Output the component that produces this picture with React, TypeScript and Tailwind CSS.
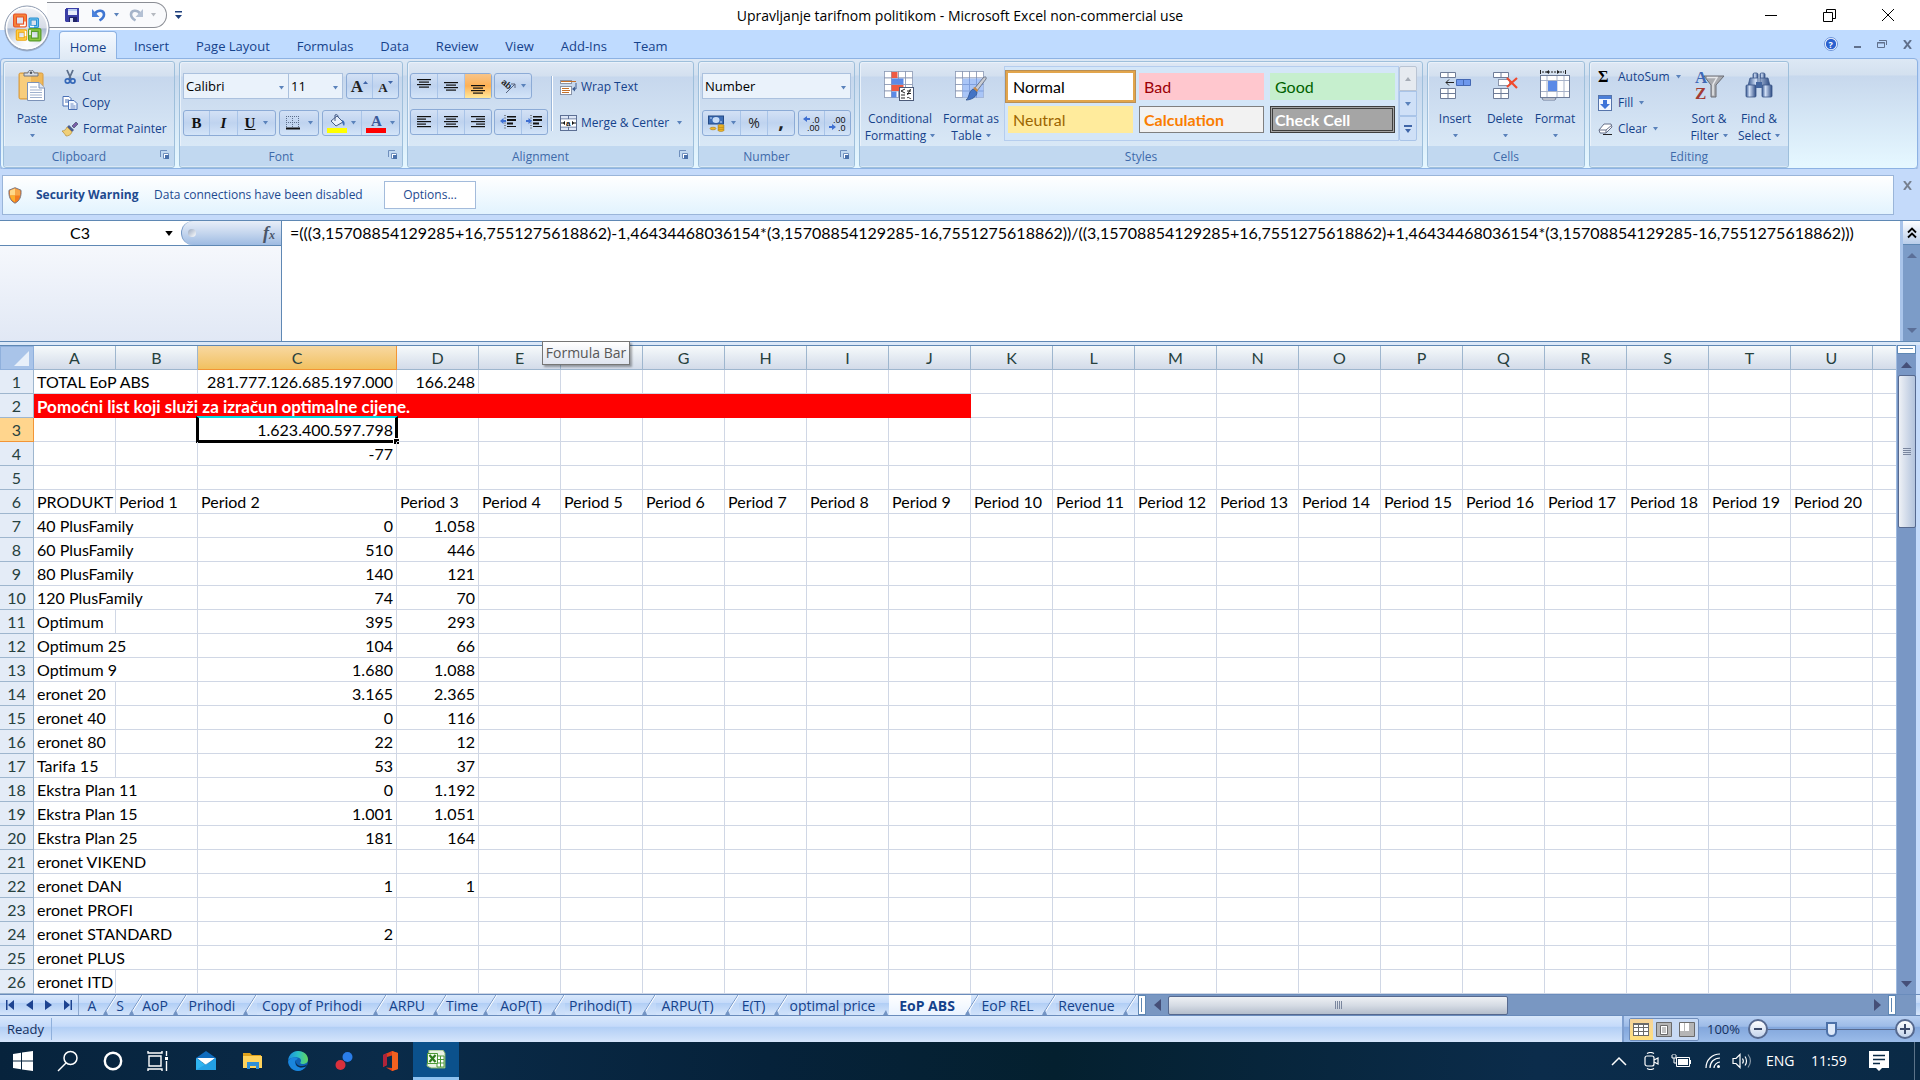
import React from 'react';

const Caret = ({ c = '#5a82bb', w = 6 }: { c?: string; w?: number }) => (
  <svg width={w} height={w / 2 + 1} viewBox="0 0 6 4" className="inline-block shrink-0"><path d="M0 0h6L3 4z" fill={c} /></svg>
);

const OfficeOrb = () => (
  <svg width="48" height="48" viewBox="0 0 48 48">
    <defs>
      <linearGradient id="orb" x1="0" y1="0" x2="0" y2="1"><stop offset="0" stopColor="#f4f5f8" /><stop offset=".5" stopColor="#d5dbe6" /><stop offset=".52" stopColor="#a9b8cf" /><stop offset="1" stopColor="#eef3fa" /></linearGradient>
      <radialGradient id="orbGlow" cx=".5" cy=".85" r=".5"><stop offset="0" stopColor="#fff" /><stop offset="1" stopColor="#fff" stopOpacity="0" /></radialGradient>
    </defs>
    <circle cx="24" cy="25" r="22.5" fill="#6f7f99" opacity=".45" />
    <circle cx="24" cy="24" r="22" fill="url(#orb)" stroke="#8e9bb0" strokeWidth="1" />
    <circle cx="24" cy="24" r="20.5" fill="url(#orbGlow)" stroke="#fff" strokeWidth="1.5" />
    <g fill="none" strokeLinejoin="round">
      <rect x="12" y="11.500" width="10" height="10" stroke="#e5502a" strokeWidth="4" />
      <rect x="12" y="11.500" width="10" height="10" stroke="#f58238" strokeWidth="2" />
      <rect x="27" y="15" width="7.500" height="7.500" stroke="#2b8fd0" strokeWidth="3" />
      <rect x="27" y="15" width="7.500" height="7.500" stroke="#6dc3f0" strokeWidth="1" />
      <rect x="14.500" y="27" width="8" height="8" stroke="#f0a30a" strokeWidth="3.500" />
      <rect x="14.500" y="27" width="8" height="8" stroke="#ffd04a" strokeWidth="1.500" />
      <rect x="27" y="26" width="9.500" height="9.500" stroke="#5a9e2e" strokeWidth="4" />
      <rect x="27" y="26" width="9.500" height="9.500" stroke="#8cc63f" strokeWidth="1.500" />
      <path d="M17 21.500h5v-4M27 22.500h4M22.500 27v5M27 26v5" stroke="#fff" strokeWidth="1.500" />
    </g>
  </svg>
);
const SaveIcon = () => (
  <svg width="15" height="15" viewBox="0 0 15 15"><path d="M0 1h1V0h13v14H1l-1-1z" fill="#3b3fa6" /><path d="M3 1h9v6H3z" fill="#e8eefb" /><path d="M3 1h9v2H3z" fill="#b9cdf2" /><path d="M4 9h8v5H4z" fill="#1f2467" /><path d="M5 10h3v4H5z" fill="#dfe5f5" /></svg>
);
const UndoIcon = ({ gray = false }: { gray?: boolean }) => (
  <svg width="14" height="14" viewBox="0 0 14 14" className={gray ? '-scale-x-100' : ''}>
    <path d="M3 5.500C6 1.500 12 2 12 6.500c0 3-2 4.500-4.500 6" fill="none" stroke={gray ? '#a5b4c9' : '#3f76d2'} strokeWidth="2.600" />
    <path d="M0 1v8h7.500z" fill={gray ? '#b4c1d4' : '#4b82dc'} />
  </svg>
);
const PasteIcon = () => (
  <svg width="28" height="32" viewBox="0 0 28 32">
    <rect x="1" y="3" width="24" height="26" rx="1.500" fill="#f0b95a" stroke="#d89a3e" />
    <rect x="2" y="4" width="11" height="24" fill="#f8cd7c" />
    <path d="M6 6V3h4c0-4 6-4 6 0h4v3z" fill="#d9dde4" stroke="#6e7480" /><circle cx="13" cy="2.800" r="1.300" fill="#4c525d" />
    <path d="M9.500 12.500H21l5.500 5.500v12.500h-17z" fill="#fff" stroke="#7c92b8" /><path d="M21 12.500V18h5.500" fill="#dfe8f6" stroke="#7c92b8" />
    <path d="M12 17h7M12 20h12M12 22.500h12M12 25h12M12 27.500h12" stroke="#9fb0cd" />
  </svg>
);
const CutIcon = () => (
  <svg width="16" height="16" viewBox="0 0 16 16" fill="none"><path d="M5 1l4 9M11 1L7 10" stroke="#5d6f8b" strokeWidth="1.800" /><circle cx="5.500" cy="12" r="2.200" stroke="#3568b8" strokeWidth="1.700" /><circle cx="10.800" cy="12" r="2.200" stroke="#3568b8" strokeWidth="1.700" /></svg>
);
const CopyIcon = () => (
  <svg width="16" height="16" viewBox="0 0 16 16"><path d="M1 1.500h6l2 2V11H1z" fill="#fff" stroke="#4a70b5" /><path d="M3 5h4M3 7h4" stroke="#4a70b5" /><path d="M6.500 5.500h5.500l3 3v6H6.500z" fill="#f3f8ff" stroke="#4a70b5" /><path d="M8.500 9h3M8.500 11h5M8.500 13h5" stroke="#4a70b5" strokeWidth=".8" /></svg>
);
const BrushIcon = () => (
  <svg width="17" height="16" viewBox="0 0 17 16"><path d="M10 5l4-4 2 2-4 4z" fill="#7b5ea8" stroke="#47516e" strokeWidth=".7" /><path d="M7 4l5 5-2 2-5-5z" fill="#4c5f8e" /><path d="M5 6l5 5c-1 3-4 4-6 4-1-2-3-4-4-5 3 0 4-2 5-4z" fill="#f0cf77" stroke="#b58c3a" strokeWidth=".7" /></svg>
);
const LinesIcon = ({ rows, top }: { rows: number[]; top: number }) => (
  <svg width="16" height="16" viewBox="0 0 16 16"><g fill="#111">{rows.map((r, i) => {
    const w = Math.abs(r) % 100, x = r < 0 ? 15 - w : r > 100 ? 1 + (14 - w) / 2 : 1;
    return <rect key={i} x={x} y={top + i * 2.5} width={w} height="1.200" />;
  })}</g></svg>
);
const IndentIcon = ({ right = false }: { right?: boolean }) => (
  <svg width="16" height="16" viewBox="0 0 16 16"><path d="M7 2h9v1.500H7zM7 5h9v2H7zM7 8.500h6v2H7zM7 12h9v1H7z" fill="#111" /><path d="M5 1v14" stroke="#333" strokeDasharray="1 1.500" /><path d={right ? 'M6 7L2.500 4v2H0v2h2.500v2z' : 'M0 7l3.500-3v2H6v2H3.500v2z'} fill="#3f6fd1" /></svg>
);
const WrapIcon = () => (
  <svg width="17" height="16" viewBox="0 0 17 16"><rect x=".5" y="1.500" width="11" height="3" fill="#fff" stroke="#8a94a8" /><rect x=".5" y="7.500" width="11" height="8" fill="#fff" stroke="#8a94a8" /><path d="M1 2.500h15M2 9.500h7M2 11.500h8M2 13.500h7" stroke="#c4712c" /><path d="M16 4v6h-3" fill="none" stroke="#3f5f93" /><path d="M12 10l3-2.500v5z" fill="#3f5f93" /></svg>
);
const MergeIcon = () => (
  <svg width="17" height="16" viewBox="0 0 17 16"><rect x=".5" y=".5" width="16" height="15" fill="#dce6f6" stroke="#5c6f94" /><path d="M8.500 1v3M8.500 12v3M1 4h15M1 12h15" stroke="#5c6f94" /><rect x="1" y="4.500" width="15" height="7" fill="#fff" /><path d="M1 8h4M12 8h4" stroke="#111" /><path d="M5 5.800v4.400L3 8zM12 5.800v4.400L14 8z" fill="#111" /><text x="6" y="11" fontSize="8" fontWeight="700" fontFamily="Liberation Sans, sans-serif" fill="#111">a</text></svg>
);
const MoneyIcon = () => (
  <svg width="17" height="17" viewBox="0 0 17 17"><rect x=".5" y="1" width="15" height="8" fill="#3d6db5" stroke="#244a86" /><ellipse cx="8" cy="5" rx="3.500" ry="3" fill="#c7dcf7" /><path d="M2 3h2M12 7h2" stroke="#c7dcf7" /><g fill="#f2b825" stroke="#a87813" strokeWidth=".6"><ellipse cx="13" cy="15" rx="3.200" ry="1.400" /><ellipse cx="13" cy="13" rx="3.200" ry="1.400" /><ellipse cx="13" cy="11" rx="3.200" ry="1.400" /><ellipse cx="5" cy="13.500" rx="3" ry="1.300" /></g></svg>
);
const DecimalIcon = ({ inc = false }: { inc?: boolean }) => (
  <svg width="17" height="17" viewBox="0 0 17 17" fontFamily="Liberation Sans, sans-serif" fontSize="9" fill="#111" className="overflow-visible"><text x={inc ? 9 : 4} y="8">{inc ? '.0' : '.00'}</text><text x={inc ? 4 : 9} y="16">{inc ? '.00' : '.0'}</text><path d={inc ? 'M0 4l4-3v2h3v2H4v2z' : 'M7 12l-4-3v2H0v2h3v2z'} fill="#3f6fd1" /></svg>
);
const BorderIcon = () => (
  <svg width="14" height="14" viewBox="0 0 14 14"><path d="M.5 0v12M6.500 0v12M12.500 0v12M0 .5h13M0 6.500h13" stroke="#5d6f8b" strokeDasharray="1 1" /><path d="M0 12.500h14" stroke="#111" strokeWidth="2" /></svg>
);
const BucketIcon = () => (
  <svg width="20" height="19" viewBox="0 0 20 19"><path d="M4 7l6-5 6 6-7 4z" fill="#e9f0fb" stroke="#445b86" /><path d="M8 7V1c2-1 3 0 3 2" fill="none" stroke="#445b86" /><path d="M15 6c3 1 3 4 2 6-1-1-2-3-2-6z" fill="#3d6db5" /><rect y="14" width="20" height="5" fill="#ff0" /></svg>
);
const FontColorIcon = () => (
  <svg width="20" height="19" viewBox="0 0 20 19"><text x="5" y="12" fontSize="15" fontWeight="700" fontFamily="Liberation Serif, serif" fill="#3b5998">A</text><rect y="14" width="20" height="5" fill="#f00" /></svg>
);
const OrientIcon = () => (
  <svg width="17" height="16" viewBox="0 0 17 16" className="overflow-visible"><text x="0" y="7" fontSize="9" fontWeight="700" fontFamily="Liberation Sans, sans-serif" fill="#222" transform="rotate(40 3 7)">ab</text><path d="M6 15L15 6M15 6v4M15 6h-4" stroke="#56627c" fill="none" /></svg>
);
const LauncherIcon = () => (
  <svg width="9" height="9" viewBox="0 0 9 9"><path d="M.5 7V.5H7" fill="none" stroke="#6f8fbd" /><path d="M3.500 3.500h5v5h-5z" fill="#fff" stroke="#6f8fbd" /><path d="M5 5h4v4H5z" fill="#4c72ab" /></svg>
);
const CellGrid = ({ n = 4, s = 7 }: { n?: number; s?: number }) => (
  <>{Array.from({ length: n * 4 }, (_, i) => <rect key={i} x={0.5 + (i % 4) * s} y={1.5 + Math.floor(i / 4) * 6.5} width={s} height="6.500" fill="#fff" stroke="#8b98b3" strokeWidth=".8" />)}</>
);
const CondIcon = () => (
  <svg width="32" height="32" viewBox="0 0 32 32"><CellGrid /><path d="M7.500 2h6v6h-6zM7.500 15h12v6h-12z" fill="#ee5a42" /><path d="M7.500 8.500h12v6h-12zM7.500 21.500h5v6h-5z" fill="#5b8ae6" /><rect x="15.500" y="17.500" width="14" height="13" fill="#fff" stroke="#4b5a78" /><path d="M21 19l-4 2 4 2M17 25h4M17 28h4M23 21h4M23 23.500h4M26.500 19l-3 6M23 28c2-2 3 2 4 0" stroke="#222" fill="none" /></svg>
);
const FmtTableIcon = () => (
  <svg width="32" height="32" viewBox="0 0 32 32"><CellGrid /><path d="M7.500 8.500h21v19h-21z" fill="#a9c5f7" /><path d="M7.500 14.500h21M7.500 21h21M14.500 8v20M21.500 8v20" stroke="#7f9fdc" /><path d="M31 9l-9 12-3-2 9-11c2-2 4-1 3 1z" fill="#c9ccd3" stroke="#5c6678" strokeWidth=".8" /><path d="M18 19l4 3c0 5-6 8-11 8 4-3 2-8 7-11z" fill="#4474c4" stroke="#31568f" strokeWidth=".8" /><path d="M18 18l2-1 3 3-1 2z" fill="#c98a45" /></svg>
);
const InsertIcon = () => (
  <svg width="32" height="32" viewBox="0 0 32 32" fill="#fff" stroke="#6e7c98"><path d="M1.500 2.500h15v5h-15zM9 2.500v5M1.500 18.500h15v10h-15zM9 18.500v10M1.500 23.500h15" /><path d="M17.500 9.500h14v6h-14z" fill="#6d97ec" stroke="#4468b4" /><path d="M24.500 10v5" stroke="#4468b4" /><path d="M7 12.500h8M10 9.500l-3 3 3 3" fill="none" stroke="#222" /></svg>
);
const DeleteIcon = () => (
  <svg width="32" height="32" viewBox="0 0 32 32" fill="#fff" stroke="#6e7c98"><path d="M4.500 2.500h15v5h-15zM12 2.500v5M4.500 18.500h15v10h-15zM12 18.500v10M4.500 23.500h15" /><path d="M9.500 9.500h11v6h-11z" strokeDasharray="1 1" stroke="#333f5c" /><path d="M18 8l10 10M28 8L18 17" stroke="#f04a2d" strokeWidth="2.200" /></svg>
);
const FormatIcon = () => (
  <svg width="32" height="32" viewBox="0 0 32 32"><path d="M1.500 0v4M26.500 0v4" stroke="#222" /><path d="M3 2h22" stroke="#222" strokeDasharray="2 1" /><path d="M10 0L7 2l3 2zM18 0l3 2-3 2z" fill="#222" /><rect x="1.500" y="5.500" width="29" height="22" fill="#fff" stroke="#6e7c98" /><path d="M8 6v21M18 6v21M25 6v21M2 10.500h28M2 21.500h28" stroke="#a8b3c9" /><path d="M9 11h9v10H9z" fill="#5b8ae6" /><path d="M3 28h14l-1 2H4z" fill="#fff" stroke="#6e7c98" /></svg>
);
const SortIcon = () => (
  <svg width="32" height="32" viewBox="0 0 32 32" fontFamily="Liberation Serif, serif" fontWeight="700" fontSize="17" className="overflow-visible"><path d="M11 6h20l-8 9v12h-5V15z" fill="#a9abb0" stroke="#6a6d75" /><path d="M14 7.500h10l-4 7v11" fill="none" stroke="#e6e7ea" strokeWidth="1.500" /><text x="2" y="13" fill="#3e68b5">A</text><text x="2" y="29" fill="#a33b33">Z</text></svg>
);
const FindIcon = () => (
  <svg width="30" height="32" viewBox="0 0 30 32"><defs><linearGradient id="bin" x1="0" x2="1"><stop offset="0" stopColor="#35568f" /><stop offset=".35" stopColor="#cfdef5" /><stop offset="1" stopColor="#2c4a82" /></linearGradient></defs><g fill="url(#bin)" stroke="#3a5688" strokeWidth=".8"><rect x="9" y="3" width="5" height="6" rx="1.500" /><rect x="16" y="3" width="5" height="6" rx="1.500" /><path d="M6 8h8v8H4zM16 8h8l2 8H16z" /><rect x="2" y="15" width="10" height="12" rx="1" /><rect x="18" y="15" width="10" height="12" rx="1" /></g><rect x="12" y="12" width="6" height="6" fill="#44669f" /></svg>
);
const FillIcon = () => (
  <svg width="14" height="16" viewBox="0 0 14 16"><rect x=".5" y=".5" width="13" height="15" fill="#f3f7ff" stroke="#5674aa" /><path d="M1 1h12v3H1z" fill="#4c7fd8" /><path d="M5 5h4v4h3l-5 5-5-5h3z" fill="#3f74d8" /></svg>
);
const EraserIcon = () => (
  <svg width="15" height="14" viewBox="0 0 15 14"><path d="M6 2h7l1 3-6 6H2L1 8z" fill="#fff" stroke="#66708a" /><path d="M1 8h7l6-5M8 8v3" fill="none" stroke="#66708a" /><path d="M5 12.500h9" stroke="#222" /></svg>
);

const btn = 'flex items-center justify-center gap-1';
const toolGroup = 'flex h-[26px] divide-x divide-[#a9c4e8] rounded-[3px] border border-[#8cabd6] bg-linear-to-b from-[#d3e1f5] via-[#bfd3ef] to-[#d3e4f8]';

function Group({ label, className, launcher, children }: { label: string; className: string; launcher?: boolean; children: React.ReactNode }) {
  return (
    <section aria-label={label} className={`flex shrink-0 flex-col overflow-hidden rounded-[3px] border border-[#9ebfdb] bg-[linear-gradient(#dfe8f4_0,#d3e0ef_14px,#c6d7ed_15px,#d9e8f6_84px)] shadow-[inset_1px_1px_0_#e9f1fa] ${className}`}>
      <div className="flex h-[84px]">{children}</div>
      <div className={`relative flex h-[20px] items-center justify-center bg-[#c1d8f0] pt-[2px] text-[#3e6aaa] ${launcher ? 'pr-5' : ''}`}>
        {label}
        {launcher && <button aria-label={`${label} options`} className="absolute right-[5px] top-1"><LauncherIcon /></button>}
      </div>
    </section>
  );
}
function BigButton({ icon, a, b, className }: { icon: React.ReactNode; a: string; b?: string; className: string }) {
  return (
    <button className={`flex flex-col items-center pt-2 leading-[17px] ${className}`}>
      <span className="flex h-8 items-center">{icon}</span>
      <span className="mt-2 whitespace-nowrap">{a}</span>
      <span className="flex h-[17px] items-center gap-1 whitespace-nowrap">{b}<Caret w={5} /></span>
    </button>
  );
}
function Combo({ value, label, className }: { value: string; label: string; className: string }) {
  return (
    <span className={`relative flex h-[26px] ${className}`}>
      <select aria-label={label} className="w-full appearance-none border border-[#abc1de] bg-[#eaf2fb] px-[2px] text-[13px] text-black"><option>{value}</option></select>
      <span className="pointer-events-none absolute right-[5px] top-[8px] leading-none"><Caret w={5} /></span>
    </span>
  );
}

const ribbonTabs = ['Insert', 'Page Layout', 'Formulas', 'Data', 'Review', 'View', 'Add-Ins', 'Team'];

function TitleBar() {
  return (
    <header className="relative flex h-[30px] shrink-0 items-center bg-white">
      <div className="absolute left-[3px] top-[4px] z-20"><button aria-label="Office Button"><OfficeOrb /></button></div>
      <div className="ml-[47px] flex h-[26px] w-[120px] items-center rounded-r-full border border-l-0 border-[#8a8d94] bg-[#f9fafc] pl-[18px]">
        <button aria-label="Save"><SaveIcon /></button>
        <button aria-label="Undo" className="ml-3"><UndoIcon /></button>
        <span className="ml-2 flex"><Caret w={5} /></span>
        <button aria-label="Redo" className="ml-[10px]"><UndoIcon gray /></button>
        <span className="ml-2 flex"><Caret w={5} c="#b5b9c0" /></span>
      </div>
      <button aria-label="Customize Quick Access Toolbar" className="ml-2"><svg width="7" height="8" viewBox="0 0 7 8"><path d="M0 0h7v1.500H0zM0 4h7L3.500 8z" fill="#1e3f7c" /></svg></button>
      <h1 className="pointer-events-none absolute inset-x-0 pt-[2px] text-center text-sm text-black">Upravljanje tarifnom politikom - Microsoft Excel non-commercial use</h1>
      <div className="ml-auto flex items-center gap-[46px] pr-[26px]">
        <button aria-label="Minimize"><svg width="12" height="12"><path d="M0 6.500h12" stroke="#000" /></svg></button>
        <button aria-label="Restore"><svg width="13" height="13" fill="none" stroke="#000"><path d="M.5 3.500h9v9h-9zM3.500 3V.5h9v9H10" /></svg></button>
        <button aria-label="Close"><svg width="12" height="12"><path d="M0 0l12 12M12 0L0 12" stroke="#000" /></svg></button>
      </div>
    </header>
  );
}

function TabRow() {
  return (
    <nav className="flex h-[28px] shrink-0 items-end bg-[#bfdbff] pl-[59px] text-[13px] text-[#15428b]">
      <button className="relative z-10 mr-[4px] -mb-px h-7 w-[58px] rounded-t-[4px] border border-b-0 border-[#8db2e3] bg-linear-to-b from-[#f4f9ff] to-[#dfe9f5] pt-[2px]">Home</button>
      <div className="flex gap-px">
        {ribbonTabs.map((t) => <button key={t} className="h-[27px] px-[13px] pt-[2px]">{t}</button>)}
      </div>
      <div className="ml-auto flex h-full items-center gap-[16px] pr-2 text-[#60708c]">
        <button aria-label="Help"><svg width="14" height="14" viewBox="0 0 14 14"><circle cx="7" cy="7" r="6.500" fill="#fff" stroke="#6c93d8" /><circle cx="7" cy="7" r="5.200" fill="#2b61cf" /><text x="4.500" y="10.500" fontSize="9" fontWeight="700" fontFamily="Open Sans, sans-serif" fill="#fff">?</text></svg></button>
        <button aria-label="Minimize workbook"><svg width="7" height="8"><path d="M0 6h7v2H0z" fill="currentColor" /></svg></button>
        <button aria-label="Restore workbook"><svg width="10" height="8" fill="none" stroke="currentColor"><path d="M.5 2.500h7v5h-7zM2 .5h7.500V5M0 3h8" /></svg></button>
        <button aria-label="Close workbook"><svg width="9" height="9"><path d="M1 0l7 9M8 0L1 9" stroke="currentColor" strokeWidth="2" /></svg></button>
      </div>
    </nav>
  );
}

function Ribbon() {
  const row = 'flex h-[26px] items-center gap-1 whitespace-nowrap';
  return (
    <div className="mr-[2px] flex h-[111px] shrink-0 gap-1 overflow-hidden rounded-[4px] border border-[#8db2e3] bg-[linear-gradient(#dde8f5_0,#d3e0ef_16px,#c7d8ed_17px,#e5f7ff_106px)] px-[2px] pt-[2px] text-[#15428b] shadow-[0_1px_1px_#8ea9cf]">
      <Group label="Clipboard" className="w-[172px]" launcher>
        <BigButton icon={<PasteIcon />} a="Paste" className="w-[56px]" />
        <div className="ml-[2px] flex flex-col pt-[2px]">
          <button className={row}><CutIcon />Cut</button>
          <button className={row}><CopyIcon />Copy</button>
          <button className={row}><BrushIcon />Format Painter</button>
        </div>
      </Group>
      <Group label="Font" className="w-[224px]" launcher>
        <div className="flex flex-col gap-[11px] px-[3px] pt-[11px]">
          <div className="flex">
            <Combo label="Font name" value="Calibri" className="w-[106px]" /><Combo label="Font size" value="11" className="-ml-px w-[55px]" />
            <div className={`${toolGroup} ml-[3px] w-[53px] font-['Liberation_Serif',serif] font-bold text-[#222]`}>
              <button className="flex flex-1 items-center justify-center pt-px text-[17px]">A<span className="mb-2"><svg width="5" height="3"><path d="M0 3h5L2.500 0z" fill="#3f65a8" /></svg></span></button>
              <button className="flex flex-1 items-center justify-center pt-1 text-[13px]">A<span className="mb-3"><svg width="5" height="3"><path d="M0 0h5L2.500 3z" fill="#3f65a8" /></svg></span></button>
            </div>
          </div>
          <div className="flex gap-[3px] text-[#111]">
            <div className={`${toolGroup} w-[93px] font-['Liberation_Serif',serif] text-[15px] font-bold`}>
              <button className="w-[26px]">B</button><button className="w-[28px] italic">I</button><button className={`${btn} flex-1`}><span className="mr-1 underline">U</span><Caret w={5} /></button>
            </div>
            <div className={`${toolGroup} w-[40px]`}><button aria-label="Borders" className={`${btn} flex-1`}><BorderIcon /><span className="ml-1 flex"><Caret w={5} /></span></button></div>
            <div className={`${toolGroup} w-[78px]`}>
              <button aria-label="Fill color" className={`${btn} flex-1`}><BucketIcon /><Caret w={5} /></button><button aria-label="Font color" className={`${btn} flex-1`}><FontColorIcon /><Caret w={5} /></button>
            </div>
          </div>
        </div>
      </Group>
      <Group label="Alignment" className="w-[287px]" launcher>
        <div className="flex flex-col gap-[10px] pl-[2px] pt-[11px]">
          <div className="flex gap-[2px]">
            <div className={`${toolGroup} w-[82px]`}>
              <button aria-label="Top align" className={`${btn} flex-1`}><LinesIcon rows={[14, 110, 14, 110]} top={1} /></button>
              <button aria-label="Middle align" className={`${btn} flex-1`}><LinesIcon rows={[14, 110, 14, 110]} top={4} /></button>
              <button aria-label="Bottom align" className={`${btn} flex-1 bg-linear-to-b from-[#f7c488] via-[#fdb053] to-[#ffe899]`}><LinesIcon rows={[14, 110, 14, 110]} top={7} /></button>
            </div>
            <div className={`${toolGroup} w-[38px]`}><button aria-label="Orientation" className={`${btn} flex-1`}><OrientIcon /><Caret w={5} /></button></div>
          </div>
          <div className="flex gap-[2px]">
            <div className={`${toolGroup} w-[82px]`}>
              <button aria-label="Align left" className={`${btn} flex-1`}><LinesIcon rows={[14, 9, 14, 9, 14]} top={2} /></button>
              <button aria-label="Center" className={`${btn} flex-1`}><LinesIcon rows={[14, 110, 14, 110, 14]} top={2} /></button>
              <button aria-label="Align right" className={`${btn} flex-1`}><LinesIcon rows={[14, -9, 14, -9, 14]} top={2} /></button>
            </div>
            <div className={`${toolGroup} w-[54px]`}><button aria-label="Decrease indent" className={`${btn} flex-1`}><IndentIcon /></button><button aria-label="Increase indent" className={`${btn} flex-1`}><IndentIcon right /></button></div>
          </div>
        </div>
        <div className="ml-[3px] mt-[14px] h-[55px] w-[2px] border-l border-[#9ab6da] bg-white" />
        <div className="ml-[7px] flex flex-col gap-[10px] pt-[12px]">
          <button className={row}><WrapIcon />Wrap Text</button>
          <button className={row}><MergeIcon />Merge &amp; Center<span className="ml-1 flex"><Caret w={5} /></span></button>
        </div>
      </Group>
      <Group label="Number" className="w-[157px]" launcher>
        <div className="flex flex-col gap-[11px] px-[3px] pt-[11px]">
          <Combo label="Number format" value="Number" className="w-[149px]" />
          <div className="flex gap-[3px] text-[#222]">
            <div className={`${toolGroup} w-[93px]`}><button aria-label="Accounting format" className={`${btn} w-[38px] gap-[6px]`}><MoneyIcon /><Caret w={5} /></button><button className="flex-1 text-[14px]">%</button><button className="flex-1 pb-2 text-[20px] leading-none font-bold">,</button></div>
            <div className={`${toolGroup} w-[53px]`}><button aria-label="Increase decimal" className={`${btn} flex-1`}><DecimalIcon inc /></button><button aria-label="Decrease decimal" className={`${btn} flex-1`}><DecimalIcon /></button></div>
          </div>
        </div>
      </Group>
      <Group label="Styles" className="w-[564px]">
        <BigButton icon={<CondIcon />} a="Conditional" b="Formatting" className="w-[80px]" />
        <BigButton icon={<FmtTableIcon />} a="Format as" b="Table" className="w-[62px]" />
        <div className="ml-[2px] mt-1 flex h-[75px]">
          <div className="grid w-[395px] grid-cols-3 content-start gap-[6px] border border-[#b5cdee] bg-[#d4e6f8] px-[3px] pt-[6px] font-['Lato',sans-serif] text-[16px]">
            <button className="h-[27px] bg-white px-[5px] text-left text-black outline-2 outline-[#e2a54c] shadow-[0_0_0_3px_#b98f55]">Normal</button>
            <button className="h-[27px] bg-[#ffc7ce] px-[5px] text-left text-[#9c0006]">Bad</button>
            <button className="h-[27px] bg-[#c6efce] px-[5px] text-left text-[#006100]">Good</button>
            <button className="h-[27px] bg-[#ffeb9c] px-[5px] text-left text-[#9c6500]">Neutral</button>
            <button className="h-[27px] border border-[#7f7f7f] bg-[#f2f2f2] px-1 text-left font-bold text-[#fa7d00]">Calculation</button>
            <button className="flex h-[27px] items-center border-[3px] border-double border-[#3f3f3f] bg-[#a5a5a5] px-[2px] text-left font-bold text-white">Check Cell</button>
          </div>
          <div className="flex w-[18px] flex-col">
            <button aria-label="Previous styles" className={`${btn} flex-1 rounded-t-[2px] border border-[#b9c4d4] bg-[#e6eaf0]`}><svg width="6" height="4"><path d="M0 4h6L3 0z" fill="#a5abb5" /></svg></button>
            <button aria-label="Next styles" className={`${btn} flex-1 border border-[#a9c4e8] bg-[#cfe0f7]`}><Caret /></button>
            <button aria-label="More styles" className={`${btn} flex-1 rounded-b-[2px] border border-[#a9c4e8] bg-[#cfe0f7]`}><svg width="8" height="8"><path d="M0 0h8v2H0zM1 4h6L4 8z" fill="#3f65a8" /></svg></button>
          </div>
        </div>
      </Group>
      <Group label="Cells" className="w-[158px]">
        <div className="flex pl-[2px]">
          <BigButton icon={<InsertIcon />} a="Insert" className="w-[50px]" />
          <BigButton icon={<DeleteIcon />} a="Delete" className="w-[50px]" />
          <BigButton icon={<FormatIcon />} a="Format" className="w-[50px]" />
        </div>
      </Group>
      <Group label="Editing" className="w-[200px]">
        <div className="flex w-[94px] flex-col pl-[8px] pt-[2px]">
          <button className={`${row} gap-[2px]`}><span className="w-[18px] text-left font-['Liberation_Serif',serif] text-[16px] font-bold text-black">Σ</span>AutoSum<span className="ml-1 flex"><Caret w={5} /></span></button>
          <button className={`${row} gap-[2px]`}><span className="w-[18px]"><FillIcon /></span>Fill<span className="ml-1 flex"><Caret w={5} /></span></button>
          <button className={`${row} gap-[2px]`}><span className="w-[18px]"><EraserIcon /></span>Clear<span className="ml-1 flex"><Caret w={5} /></span></button>
        </div>
        <BigButton icon={<SortIcon />} a="Sort &amp;" b="Filter" className="w-[50px]" />
        <BigButton icon={<FindIcon />} a="Find &amp;" b="Select" className="w-[50px]" />
      </Group>
    </div>
  );
}

function SecurityBar() {
  return (
    <div className="flex h-[51px] shrink-0 bg-[#c4dafa] pl-[2px] pt-[6px]">
      <div className="flex h-[40px] flex-1 items-center border border-[#9ab5d9] bg-linear-to-b from-white to-[#e2f3fe] pl-[5px] text-[#1e4a8f]">
        <svg width="14" height="17" viewBox="0 0 14 17"><path d="M7 .7l6 2.500c.5 6-1 10.500-6 13-5-2.500-6.500-7-6-13z" fill="#f47b20" stroke="#7c7c84" /><path d="M7 1.500L2 3.500v5h5z" fill="#ffd989" /><path d="M7 1.500l5 2v5H7z" fill="#f8a648" /><path d="M2 8.500h5V15c-3-1.500-4.500-4-5-6.500z" fill="#fbb02d" /></svg>
        <strong className="ml-[14px] w-[118px]">Security Warning</strong>
        <span className="w-[230px]">Data connections have been disabled</span>
        <button className="h-[28px] w-[92px] border border-[#a3bbdb] bg-white">Options...</button>
      </div>
      <button aria-label="Close message bar" className="flex w-[26px] justify-center pt-[6px]"><svg width="9" height="9"><path d="M1 0l7 9M8 0L1 9" stroke="#77808f" strokeWidth="2" /></svg></button>
    </div>
  );
}

function FormulaBar() {
  return (
    <div className="flex h-[122px] shrink-0 border-y border-[#5f88b4]">
      <div className="flex w-[282px] shrink-0 flex-col border-r border-[#5f88b4] bg-linear-to-b from-[#fbfcfe] to-[#e1e8f5]">
        <div className="flex h-[25px] border-b border-[#5f88b4] bg-white">
          <input aria-label="Name Box" defaultValue="C3" className="w-[160px] text-center font-['Lato',sans-serif] text-[16px] text-black outline-none" />
          <button aria-label="Name list" className="w-[18px]"><Caret w={8} c="#000" /></button>
          <div className="ml-[3px] flex flex-1 items-center justify-between rounded-l-full border-l border-[#7397c5] bg-linear-to-b from-[#e8eef8] via-[#c5d6ee] to-[#9ebbe2] pl-[6px] pr-[6px]">
            <span className="size-2 rounded-full bg-linear-to-br from-[#9aa9c0] to-white" />
            <button aria-label="Insert Function" className="font-['Liberation_Serif',serif] text-[18px] font-bold italic leading-none text-[#4a5568]">f<span className="text-[12px]">x</span></button>
          </div>
        </div>
      </div>
      <textarea aria-label="Formula" spellCheck={false} className="flex-1 resize-none bg-white px-2 pt-px font-['Lato',sans-serif] text-[16px] leading-[22px] text-black outline-none" defaultValue="=(((3,15708854129285+16,7551275618862)-1,46434468036154*(3,15708854129285-16,7551275618862))/((3,15708854129285+16,7551275618862)+1,46434468036154*(3,15708854129285-16,7551275618862)))" />
      <div className="flex w-[20px] flex-col items-center border-l-[3px] border-[#a9c4ea] bg-[#7c9cc8]">
        <button aria-label="Collapse formula bar" className="flex h-6 w-full items-center justify-center border-b border-[#5f88b4] bg-linear-to-b from-white to-[#b9cdea]"><svg width="10" height="12" fill="none" stroke="#000" strokeWidth="1.800"><path d="M1 5.500l4-4 4 4M1 10.500l4-4 4 4" /></svg></button>
        <svg width="10" height="5" className="mt-2"><path d="M0 5h10L5 0z" fill="#5b6f98" /></svg>
        <svg width="10" height="5" className="mt-auto mb-2"><path d="M0 0h10L5 5z" fill="#5b6f98" /></svg>
      </div>
    </div>
  );
}

const letters = 'ABCDEFGHIJKLMNOPQRSTU'.split('');
type Row = { a: string; c?: string; d?: string; span?: boolean };
const rows: Row[] = [
  { a: 'TOTAL EoP ABS', c: '281.777.126.685.197.000', d: '166.248', span: true },
  { a: '' }, { a: '', c: '1.623.400.597.798' }, { a: '', c: '-77' }, { a: '' }, { a: 'PRODUKT' },
  { a: '40 PlusFamily', c: '0', d: '1.058', span: true }, { a: '60 PlusFamily', c: '510', d: '446', span: true },
  { a: '80 PlusFamily', c: '140', d: '121', span: true }, { a: '120 PlusFamily', c: '74', d: '70', span: true },
  { a: 'Optimum', c: '395', d: '293' }, { a: 'Optimum 25', c: '104', d: '66', span: true },
  { a: 'Optimum 9', c: '1.680', d: '1.088', span: true }, { a: 'eronet 20', c: '3.165', d: '2.365' },
  { a: 'eronet 40', c: '0', d: '116' }, { a: 'eronet 80', c: '22', d: '12' }, { a: 'Tarifa 15', c: '53', d: '37' },
  { a: 'Ekstra Plan 11', c: '0', d: '1.192', span: true }, { a: 'Ekstra Plan 15', c: '1.001', d: '1.051', span: true },
  { a: 'Ekstra Plan 25', c: '181', d: '164', span: true }, { a: 'eronet VIKEND', span: true },
  { a: 'eronet DAN', c: '1', d: '1', span: true }, { a: 'eronet PROFI', span: true },
  { a: 'eronet STANDARD', c: '2', span: true }, { a: 'eronet PLUS', span: true }, { a: 'eronet ITD' },
];
const cell = 'relative h-6 whitespace-nowrap border-b border-r border-[#d0d7e5] px-[3px] py-0';

function GridRow({ r, n }: { r: Row; n: number }) {
  const head = <th scope="row" className={`h-6 border-b border-r p-0 text-center font-normal text-[#27413e] ${n === 3 ? 'border-[#f29536] bg-[#ffd58d]' : 'border-[#9eb6ce] bg-[#e4ecf7]'}`}>{n}</th>;
  const blanks = (from: number) => Array.from({ length: 22 - from }, (_, i) => <td key={from + i} className={`${cell} ${from + i === 21 ? 'border-r-0' : ''}`} />);
  if (n === 2) return <tr>{head}<td colSpan={10} className="h-6 bg-[#f00] px-[3px] py-0 text-[17px] leading-none font-bold whitespace-nowrap text-white">Pomoćni list koji služi za izračun optimalne cijene.</td>{blanks(10)}</tr>;
  if (n === 6) return <tr>{head}<td className={cell}>{r.a}</td>{Array.from({ length: 20 }, (_, i) => <td key={i} className={cell}>Period {i + 1}</td>)}<td className={`${cell} border-r-0`} /></tr>;
  return (
    <tr>
      {head}
      <td colSpan={r.span ? 2 : 1} className={cell}>{r.a}</td>
      {!r.span && <td className={cell} />}
      <td className={`${cell} text-right`}>
        {r.c}
        {n === 3 && (
          <span className="pointer-events-none absolute -bottom-[2px] -left-[2px] -right-[2px] -top-[2px] border-[3px] border-t-2 border-black border-t-[#00d8e0]">
            <span className="absolute -bottom-[4px] -right-[4px] size-[6px] border-l border-t border-white bg-black" />
          </span>
        )}
      </td>
      <td className={`${cell} text-right`}>{r.d}</td>
      {blanks(4)}
    </tr>
  );
}

function Sheet() {
  const th = 'border-b border-r border-[#9eb6ce] bg-linear-to-b from-[#f6fafb] to-[#d3dbe9]';
  return (
    <div className="relative flex min-h-0 flex-1 border-t-[3px] border-[#dbe8f8]">
      <div className="min-w-0 flex-1 overflow-hidden border-t border-[#5f88b4] bg-white">
        <table className="w-full table-fixed border-separate border-spacing-0 font-['Lato',sans-serif] text-[16px] leading-none text-black">
          <colgroup>
            <col className="w-[34px]" /><col className="w-[82px]" /><col className="w-[82px]" /><col className="w-[199px]" />
            {letters.slice(3).map((l) => <col key={l} className="w-[82px]" />)}
            <col />
          </colgroup>
          <thead>
            <tr>
              <th className="h-6 border border-[#8fb0dc] bg-[#a9c4e9] p-0"><svg width="15" height="15" className="ml-auto mr-1"><path d="M15 0v15H0z" fill="#e8f0fa" /></svg></th>
              {letters.map((l) => <th key={l} scope="col" className={`h-6 p-0 font-normal text-[#27413e] ${l === 'C' ? 'border-b border-r border-[#f29536] bg-linear-to-b from-[#f8d8a0] to-[#f1c15f]' : th}`}>{l}</th>)}
              <th className={`h-6 p-0 ${th} border-r-0`} />
            </tr>
          </thead>
          <tbody>{rows.map((r, i) => <GridRow key={i} r={r} n={i + 1} />)}</tbody>
        </table>
      </div>
      <div className="mr-1 flex w-[20px] shrink-0 flex-col items-center border-l border-[#9ebae0] bg-[#7997c5]">
        <div className="h-[9px] w-full border border-[#5f88b4] bg-white p-[2px]"><div className="h-px bg-[#5f88b4]" /></div>
        <button aria-label="Scroll up" className="flex h-[21px] w-full items-center justify-center"><svg width="11" height="6"><path d="M0 6h11L5.500 0z" fill="#454f78" /></svg></button>
        <div className="flex h-[153px] w-[18px] flex-col items-center justify-center gap-px rounded-[2px] border border-[#56698f] bg-linear-to-r from-[#eef1f6] to-[#b3c3dc]">
          {[0, 1, 2, 3].map((i) => <span key={i} className="h-px w-2 border-b border-[#7a869e]" />)}
        </div>
        <button aria-label="Scroll down" className="mt-auto flex h-[20px] w-full items-center justify-center"><svg width="11" height="6"><path d="M0 0h11L5.500 6z" fill="#454f78" /></svg></button>
      </div>
      <div role="tooltip" className="absolute left-[542px] -top-[4px] flex h-6 w-[88px] items-center justify-center border border-[#767676] bg-linear-to-b from-white to-[#dfe4ef] text-sm text-[#575757] shadow-[2px_2px_2px_#0005]">Formula Bar</div>
    </div>
  );
}

const sheets: [string, string][] = [
  ['A', 'w-[30px]'], ['S', 'w-[26px]'], ['AoP', 'w-[44px]'], ['Prihodi', 'w-[70px]'], ['Copy of Prihodi', 'w-[130px]'], ['ARPU', 'w-[60px]'], ['Time', 'w-[50px]'],
  ['AoP(T)', 'w-[68px]'], ['Prihodi(T)', 'w-[91px]'], ['ARPU(T)', 'w-[83px]'], ['E(T)', 'w-[49px]'], ['optimal price', 'w-[109px]'], ['EoP ABS', 'w-[82px]'], ['EoP REL', 'w-[77px]'], ['Revenue', 'w-[81px]'],
];
const blueBar = 'bg-[linear-gradient(#d9e8fb_0,#c4dafa_40%,#b1cef5_42%,#d5e5fb_100%)]';

function SheetTabs() {
  const arrow = 'M7 0v10L0 5z';
  return (
    <div className={`flex h-[22px] shrink-0 border-y border-[#6a8cbc] ${blueBar} text-[#15428b]`}>
      <div className="flex w-[79px] items-center gap-[12px] border-r border-[#8ea9cf] pl-[6px]">
        <button aria-label="First sheet"><svg width="8" height="10" fill="#1d4390"><path d="M0 0h1.500v10H0zM8 0v10L2 5z" /></svg></button>
        <button aria-label="Previous sheet"><svg width="7" height="10" fill="#1d4390"><path d={arrow} /></svg></button>
        <button aria-label="Next sheet"><svg width="7" height="10" fill="#1d4390"><path d="M0 0v10l7-5z" /></svg></button>
        <button aria-label="Last sheet"><svg width="8" height="10" fill="#1d4390"><path d="M6.500 0H8v10H6.500zM0 0v10l6-5z" /></svg></button>
      </div>
      {sheets.map(([s, w]) => (
        <button key={s} className={`relative shrink-0 whitespace-nowrap pr-1 pt-[2px] text-[14px] leading-none ${w} ${s === 'EoP ABS' ? 'bg-linear-to-b from-white to-[#eaf3ff] pr-[6px] font-bold' : ''}`}>
          {s}
          <svg width="14" height="20" viewBox="0 0 14 20" className="absolute -right-[8px] top-0"><path d="M1 20L13 0h1v20z" fill={s === 'optimal price' ? 'none' : '#c9ddf9'} opacity=".5" /><path d={s === 'optimal price' ? 'M6.500 0v20' : 'M1 19L13 0'} stroke="#7394c4" /><path d="M2 19L14 0" stroke="#fff" opacity={s === 'optimal price' ? 0 : 1} /><path d="M0 20l3-5 2 5z" fill="#7394c4" /></svg>
        </button>
      ))}
      <div className="ml-[9px] w-[8px] shrink-0 border border-[#5f88b4] bg-white p-[2px]"><div className="h-full w-px bg-[#5f88b4]" /></div>
      <div className="mr-1 flex flex-1 items-center bg-[#7997c2]">
        <button aria-label="Scroll left" className="flex w-[22px] justify-center"><svg width="7" height="12"><path d="M7 0v12L0 6z" fill="#454f78" /></svg></button>
        <div className="flex h-[19px] w-[340px] items-center justify-center gap-px rounded-[2px] border border-[#56698f] bg-linear-to-b from-[#eef0f4] via-[#d5dbe4] to-[#b4becc]">
          {[0, 1, 2, 3].map((i) => <span key={i} className="h-2 w-px border-r border-[#7a869e]" />)}
        </div>
        <button aria-label="Scroll right" className="ml-auto mr-[7px]"><svg width="7" height="12"><path d="M0 0v12l7-6z" fill="#454f78" /></svg></button>
        <div className="mr-[20px] h-full w-[8px] border border-[#5f88b4] bg-white p-[2px]"><div className="h-full w-px bg-[#5f88b4]" /></div>
      </div>
    </div>
  );
}

function StatusBar() {
  const circ = 'flex size-[20px] shrink-0 items-center justify-center rounded-full border-2 border-[#56698f] bg-linear-to-b from-white to-[#c4d4ec]';
  return (
    <div className={`flex h-[26px] shrink-0 items-center ${blueBar} text-[#15305f]`}>
      <span className="w-[52px] border-r border-[#8fb0dc] pl-[7px] text-[13px] leading-[22px]">Ready</span>
      <div className="ml-auto flex h-full w-[298px] items-center border-l-2 border-[#7f9fcf] bg-[linear-gradient(#b7cff1_0,#9dbbe7_40%,#82a6dc_42%,#9bbce9_100%)] pl-[5px]">
        <div className="flex h-[23px] w-[70px] overflow-hidden rounded-[2px] border border-[#6e8cba] bg-[#c8daf4]">
          <button aria-label="Normal view" className={`${btn} flex-1 bg-linear-to-b from-[#f5d39b] to-[#ffdf7c]`}><svg width="16" height="13"><path d="M0 0h16v13H0z" fill="#6a6a6a" /><path d="M1 2h4v2H1zM6 2h4v2H6zM11 2h4v2h-4zM1 5h4v3H1zM6 5h4v3H6zM11 5h4v3h-4zM1 9h4v3H1zM6 9h4v3H6zM11 9h4v3h-4z" fill="#fff" /></svg></button>
          <button aria-label="Page layout view" className={`${btn} flex-1`}><svg width="16" height="15"><path d="M.5.5h15v14H.5z" fill="#b5b5b5" stroke="#6a6a6a" /><path d="M4.500 3.500h7v9h-7z" fill="#fff" stroke="#6a6a6a" /><path d="M6 6h4M6 8h4M6 10h4" stroke="#888" /></svg></button>
          <button aria-label="Page break preview" className={`${btn} flex-1`}><svg width="16" height="15"><path d="M.5.5h15v14H.5z" fill="#b5b5b5" stroke="#6a6a6a" /><path d="M1 1h4v8H1zM6 1h4v8H6z" fill="#fff" /></svg></button>
        </div>
        <label htmlFor="zoom" className="ml-2 w-[41px] text-[13px] leading-none">100%</label>
        <button aria-label="Zoom out" className={circ}><span className="h-[2px] w-[8px] bg-[#3b4a6b]" /></button>
        <input id="zoom" type="range" defaultValue={50} className="h-5 min-w-0 flex-1 appearance-none bg-[linear-gradient(#56698f,#56698f)] bg-[length:100%_1px] bg-center bg-no-repeat [&::-webkit-slider-thumb]:h-[15px] [&::-webkit-slider-thumb]:w-[11px] [&::-webkit-slider-thumb]:appearance-none [&::-webkit-slider-thumb]:rounded-b-[6px] [&::-webkit-slider-thumb]:border-2 [&::-webkit-slider-thumb]:border-[#4d71a8] [&::-webkit-slider-thumb]:bg-[#dfeafa]" />
        <button aria-label="Zoom in" className={`${circ} mr-[5px]`}><svg width="10" height="10"><path d="M0 5h10M5 0v10" stroke="#3b4a6b" strokeWidth="2" /></svg></button>
      </div>
    </div>
  );
}

function Taskbar() {
  const slot = 'flex h-full w-[46px] items-center justify-center';
  const sys = 'flex h-full w-[45px] items-center justify-center';
  return (
    <footer className="flex h-[38px] shrink-0 items-center bg-[linear-gradient(90deg,#07233c,#0a2b49_20%,#06223a_40%,#04202f_55%,#0b2c4b_80%,#0a2a46)] font-['Open_Sans',sans-serif] text-white">
      <button aria-label="Start" className={sys}><svg width="20" height="20" fill="#fff"><path d="M0 3l8-1.200V9.500H0zM9 1.600L20 0v9.500H9zM0 10.500h8v7.700L0 17zM9 10.500h11V20L9 18.400z" /></svg></button>
      <button aria-label="Search" className={sys}><svg width="22" height="22" fill="none" stroke="#fff" strokeWidth="1.500"><circle cx="13.500" cy="8" r="6.500" /><path d="M9 13l-8 8" /></svg></button>
      <button aria-label="Cortana" className={sys}><svg width="20" height="20"><circle cx="10" cy="10" r="8.200" fill="none" stroke="#fff" strokeWidth="2.400" /></svg></button>
      <button aria-label="Task View" className={`${sys} mr-[3px]`}><svg width="22" height="20" fill="none" stroke="#fff" strokeWidth="1.400"><path d="M2 5h12v10H2zM1 0v2h14V0M1 20v-2h14v2M19.500 0v5M19.500 10v10" /><path d="M18 6h3v3h-3z" fill="#fff" stroke="none" /></svg></button>
      <button aria-label="Mail" className={slot}><svg width="20" height="20"><path d="M0 7l10-7 10 7v4H0z" fill="#0f6cbd" /><path d="M0 7l10 7 10-7v12H0z" fill="#2fb4f0" /><path d="M1 7h18l-9 7z" fill="#fff" /><path d="M0 19L20 7v12z" fill="#1c93dc" opacity=".6" /></svg></button>
      <button aria-label="File Explorer" className={slot}><svg width="19" height="18"><path d="M0 1h7l2 2h9v3H0z" fill="#e0a21b" /><path d="M0 4h19v12H0z" fill="#ffd35c" /><path d="M4 10h12v7h-3v-3H7v3H4z" fill="#2e8fd8" /></svg></button>
      <button aria-label="Edge" className={slot}><svg width="20" height="20" viewBox="0 0 20 20"><defs><linearGradient id="edg" x1="0" x2="1"><stop offset="0" stopColor="#1a8fe0" /><stop offset=".5" stopColor="#2bc0c4" /><stop offset="1" stopColor="#63d65a" /></linearGradient></defs><circle cx="10" cy="10" r="10" fill="#0f62b5" /><path d="M.3 9C1 3.500 5 0 10 0c6 0 10 4 10 8.500 0 3-2.500 4.500-5 4.500-3 0-3-1.200-2.300-2 .8-1.500.3-4-3-4.500C6 6 2 7 .3 9z" fill="url(#edg)" /><path d="M7 11c0 5 5 7 11 4-2 3.500-5 5-8 5C5 20 1 16 .2 11 1 7 5 6 8 6.500 10 7 10 8 9 8.500c-1.500.5-2 1.500-2 2.500z" fill="#1a86dd" /><path d="M8 9c-1 5 4 8 11 4.500-.3 1-.7 1.500-1.200 2C13 18 6 16 8 9z" fill="#0a2a49" /></svg></button>
      <button aria-label="Dots app" className={slot}><svg width="18" height="20"><circle cx="12.500" cy="6" r="5" fill="#2a7de8" /><circle cx="5.500" cy="14" r="5" fill="#d9303c" /></svg></button>
      <button aria-label="Office" className={slot}><svg width="17" height="20"><path d="M10 0L1 4v12l4-2V6l5-1.500V17l-6-.5 6 3.500 6-2V2z" fill="#e0401b" /><path d="M10 0l6 2v16l-6 2z" fill="#f2611f" /><path d="M1 4l4-2v12l-4 2z" fill="#b0243a" /></svg></button>
      <button aria-label="Excel" className={`${slot} border-b-[3px] border-[#8fc3f0] bg-[#0b518c]`}><svg width="20" height="19"><path d="M3 0h14l2 3v15H5l-4-2z" fill="#e9f3e4" stroke="#7fae6b" /><path d="M11 6h7v11h-7z" fill="#fff" stroke="#4f9a3c" /><path d="M11 9.500h7M11 13h7M14.500 6v11" stroke="#4f9a3c" /><path d="M1.500 3.500h10v10h-10z" fill="#f1f8ec" stroke="#4c9a35" /><path d="M3.500 5l6 7M9.500 5l-6 7" stroke="#2c7a1c" strokeWidth="2.200" /></svg></button>
      <div className="ml-auto flex h-full items-center">
        <svg width="16" height="10" className="mr-[17px]" fill="none" stroke="#fff" strokeWidth="1.500"><path d="M1 9l7-7 7 7" /></svg>
        <svg width="16" height="18" className="mr-[11px]" fill="none" stroke="#fff" strokeWidth="1.200"><rect x="1" y="4" width="9" height="10" rx="2" /><path d="M10 8l4-2v6l-4-2M3 1.500C5 .3 8 .3 10 1.500M3 16.500c2 1.200 5 1.200 7 0" /></svg>
        <svg width="21" height="14" className="mr-[13px]" fill="none" stroke="#fff"><path d="M5.500 3.500h13v9h-13zM19.500 6v4M1 1v3h4V1M3 4v5h2M2 0v1M4 0v1" /><path d="M7 5h10v6H7z" fill="#fff" stroke="none" /></svg>
        <svg width="16" height="16" className="mr-[11px]" fill="none" stroke="#fff" strokeWidth="1.200"><path d="M1 15C1 7 7 1 15 1M5 15C5 9 9 5 15 5M9 15c0-3 3-6 6-6" /><circle cx="13.500" cy="13.500" r="1.500" fill="#fff" stroke="none" /></svg>
        <svg width="20" height="16" className="mr-[14px]" fill="none" stroke="#fff" strokeWidth="1.200"><path d="M1 5.500h3l4-4v13l-4-4H1zM10.500 5.500c1 1.500 1 3.500 0 5M13 3.500c2 2.500 2 6.500 0 9" /><path d="M16 1.500c3 4 3 9 0 13" opacity=".5" /></svg>
        <span className="w-[45px] text-[14px]">ENG</span>
        <time className="w-[58px] text-[14px]">11:59</time>
        <button aria-label="Notifications"><svg width="20" height="20"><path d="M0 0h20v17h-7l-3 3-3-3H0z" fill="#fff" /><path d="M4 4.500h12M4 8.500h12M4 12.500h7" stroke="#0a2a46" strokeWidth="1.300" /></svg></button>
        <span className="ml-[25px] mr-[5px] h-full w-px bg-[#5b7389]" />
      </div>
    </footer>
  );
}

export default function App() {
  return (
    <div className="flex h-screen flex-col overflow-hidden bg-[#c4dafa] font-['Open_Sans',sans-serif] text-[12px] leading-[18px]">
      <TitleBar />
      <TabRow />
      <Ribbon />
      <SecurityBar />
      <FormulaBar />
      <Sheet />
      <SheetTabs />
      <StatusBar />
      <Taskbar />
    </div>
  );
}
